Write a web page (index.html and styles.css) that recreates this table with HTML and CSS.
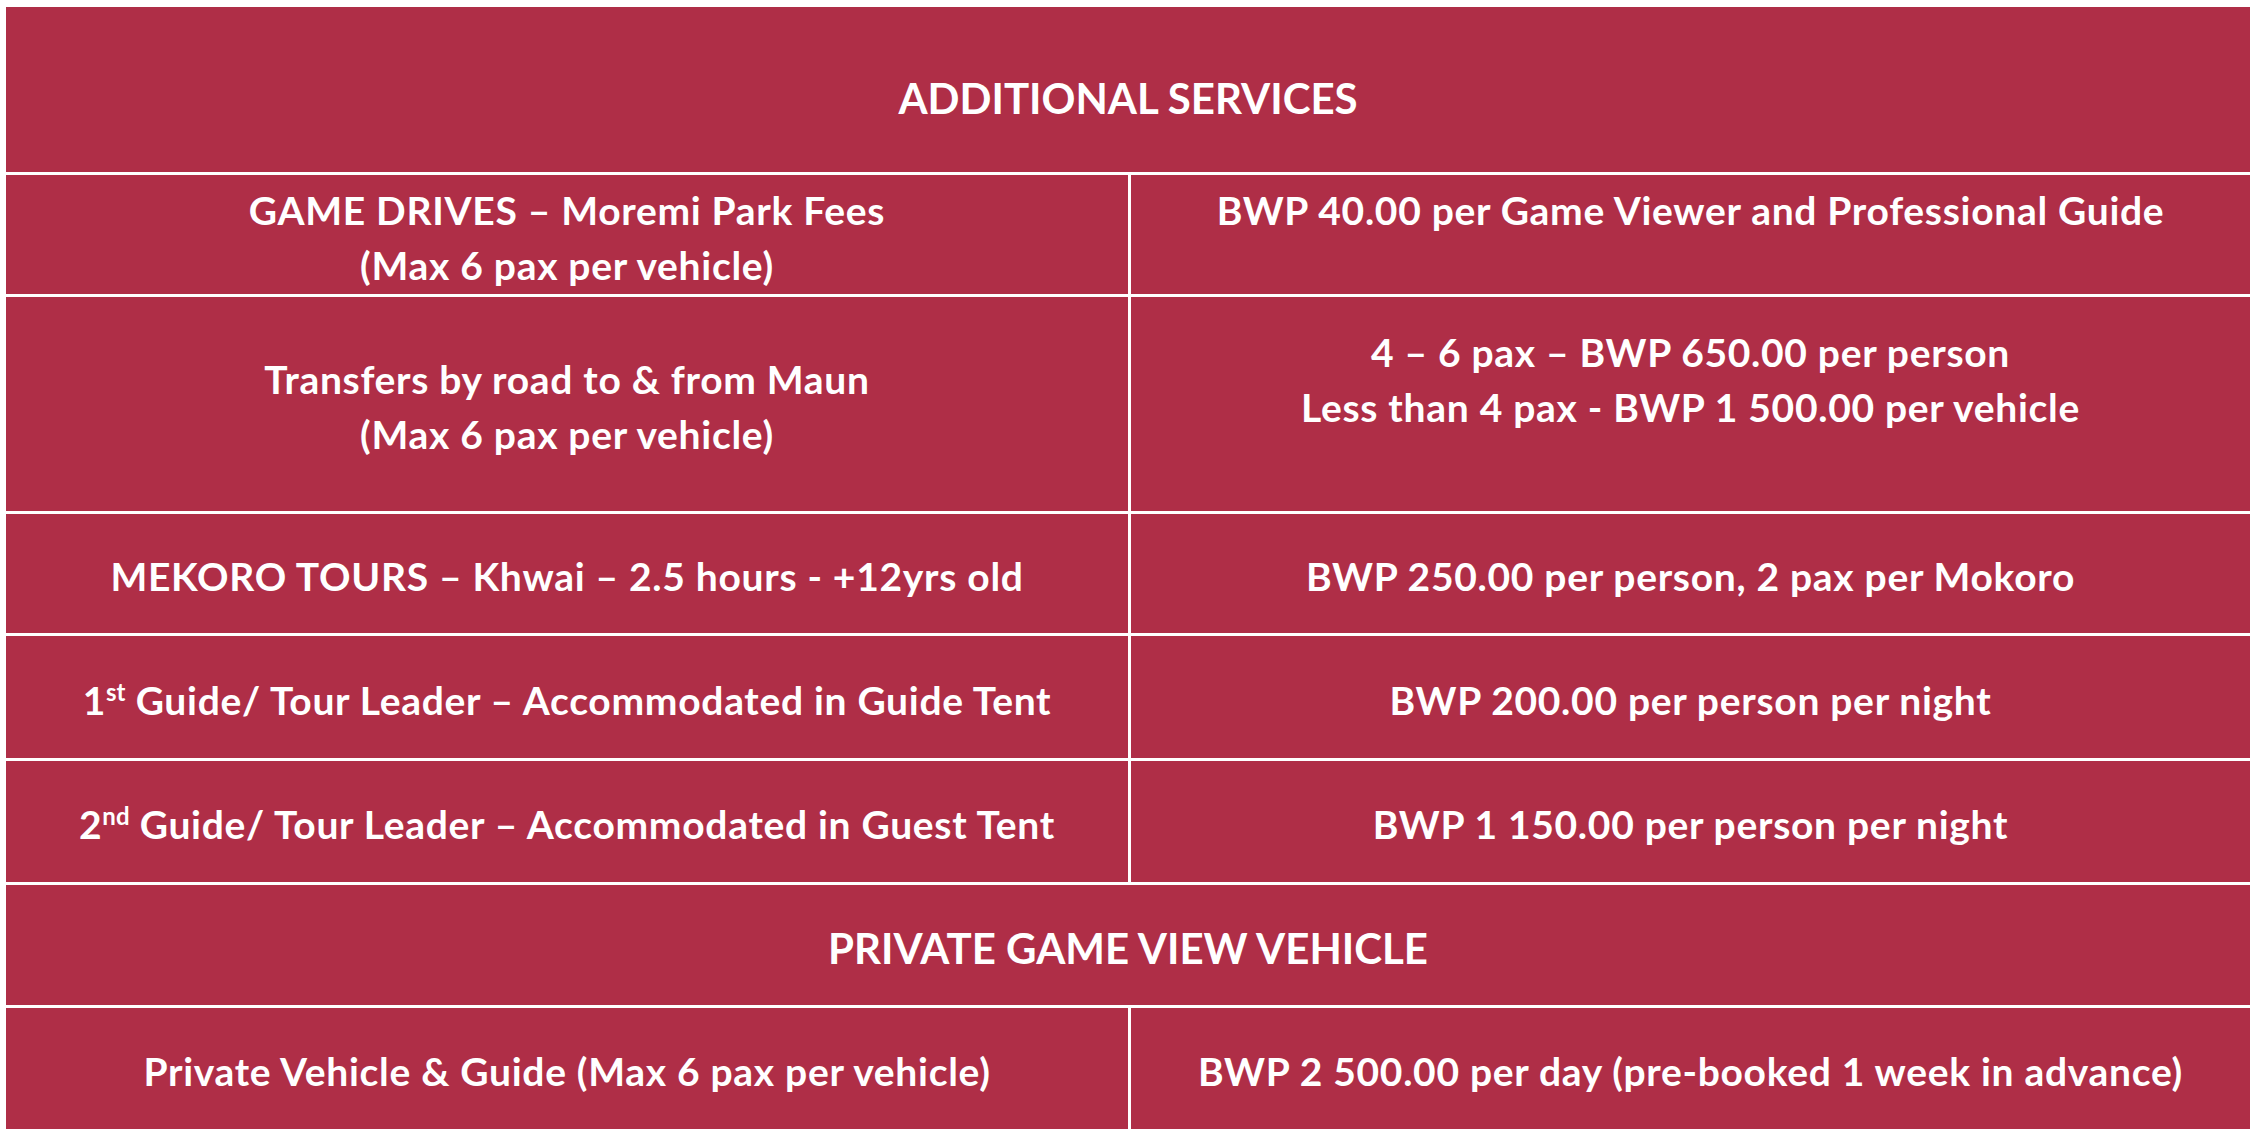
FILE: index.html
```html
<!DOCTYPE html>
<html lang="en">
<head>
<meta charset="utf-8">
<title>Additional Services</title>
<link rel="stylesheet" href="styles.css">
</head>
<body>
<div class="sheet">
  <div class="grid">
    <div class="cell span head r-head"><span class="t">ADDITIONAL SERVICES</span></div>

    <div class="cell r1"><span class="t">GAME DRIVES – Moremi Park Fees<br>(Max 6 pax per vehicle)</span></div>
    <div class="cell r1"><span class="t">BWP 40.00 per Game Viewer and Professional Guide<br>&nbsp;</span></div>

    <div class="cell r2"><span class="t">Transfers by road to &amp; from Maun<br>(Max 6 pax per vehicle)</span></div>
    <div class="cell r2"><span class="t">4 – 6 pax – BWP 650.00 per person<br>Less than 4 pax - BWP 1 500.00 per vehicle<br>&nbsp;</span></div>

    <div class="cell r3"><span class="t">MEKORO TOURS – Khwai – 2.5 hours - +12yrs old</span></div>
    <div class="cell r3"><span class="t">BWP 250.00 per person, 2 pax per Mokoro</span></div>

    <div class="cell r4"><span class="t">1<sup>st</sup> Guide/ Tour Leader – Accommodated in Guide Tent</span></div>
    <div class="cell r4"><span class="t">BWP 200.00 per person per night</span></div>

    <div class="cell r5"><span class="t">2<sup>nd</sup> Guide/ Tour Leader – Accommodated in Guest Tent</span></div>
    <div class="cell r5"><span class="t">BWP 1 150.00 per person per night</span></div>

    <div class="cell span head2 r6"><span class="t">PRIVATE GAME VIEW VEHICLE</span></div>

    <div class="cell r7"><span class="t">Private Vehicle &amp; Guide (Max 6 pax per vehicle)</span></div>
    <div class="cell r7"><span class="t">BWP 2 500.00 per day (pre-booked 1 week in advance)</span></div>
  </div>
</div>
</body>
</html>
```
FILE: styles.css
```css
html, body {
  margin: 0;
  padding: 0;
  background: #ffffff;
}

.sheet {
  padding: 7px 0 0 6px;
}

.grid {
  display: grid;
  width: 2244px;
  grid-template-columns: 1122px 1119px;
  grid-template-rows: 165px 119px 214px 119px 122px 121px 120px 121px;
  column-gap: 3px;
  row-gap: 3px;
  background: #ffffff;
  font-family: Lato, "Open Sans", sans-serif;
  font-weight: 700;
  color: #ffffff;
}

.cell {
  background: #af2e47;
  display: flex;
  align-items: center;
  justify-content: center;
  text-align: center;
  font-size: 39px;
  letter-spacing: 0.7px;
  line-height: 55px;
}

.cell .t {
  display: block;
  position: relative;
  top: 3px;
}

.span {
  grid-column: 1 / 3;
}

.head {
  font-size: 42px;
  letter-spacing: 0;
}

.head .t {
  top: 9px;
}

.head2 {
  font-size: 42px;
  letter-spacing: 0;
}

sup {
  font-size: 24px;
  line-height: 0;
  vertical-align: 14px;
  letter-spacing: 0;
}
```
